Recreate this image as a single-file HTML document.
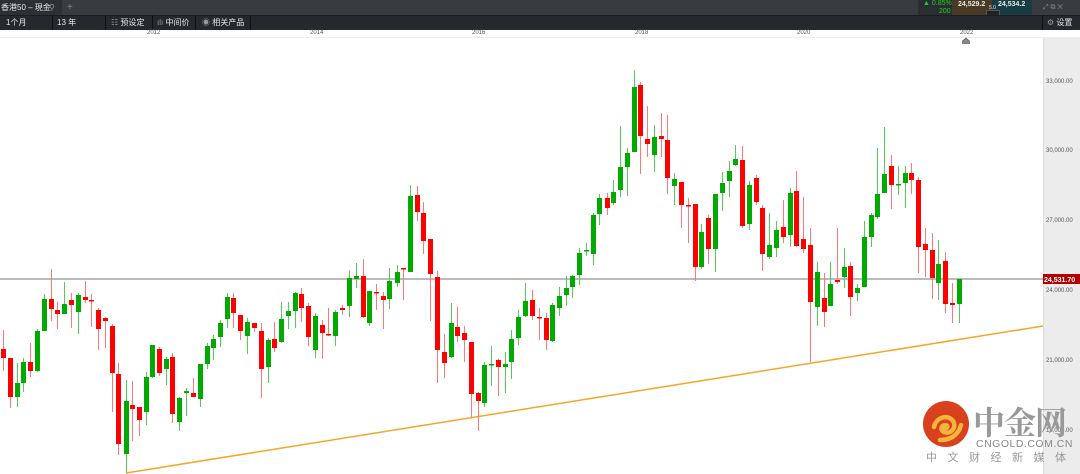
<!DOCTYPE html>
<html><head><meta charset="utf-8"><style>
*{margin:0;padding:0;box-sizing:border-box}
body{width:1080px;height:474px;overflow:hidden;background:#fff;font-family:"Liberation Sans","Noto Sans CJK SC",sans-serif;position:relative}
.r1{position:absolute;left:0;top:0;width:1080px;height:15px;background:#383b40}
.r2{position:absolute;left:0;top:15px;width:1080px;height:15px;background:#25282c;border-top:1px solid #1a1c1f}
.t{position:absolute;font-size:8px;color:#e6e6e6;line-height:15px;white-space:nowrap}
.sep{position:absolute;top:15px;width:1px;height:15px;background:#111}
.ax{position:absolute;font-size:6px;color:#555;}
</style></head><body>
<div class="r1"></div>
<div style="position:absolute;left:0;top:0;width:62px;height:15px;background:#2c2f34"></div>
<div class="t" style="left:1px;top:0">香港50 – 現金</div>
<div class="t" style="left:49px;top:0;color:#999">⚲</div>
<div class="t" style="left:67px;top:0;color:#888;font-size:10px">+</div>
<div style="position:absolute;left:918px;top:0;width:34px;height:15px;background:#2a2d31"></div>
<div class="t" style="left:923px;top:-4px;color:#2c2;font-size:7px">▲ 0.85%</div>
<div class="t" style="left:939px;top:4px;color:#2c2;font-size:7px">200</div>
<div style="position:absolute;left:953px;top:0;width:39px;height:15px;background:#4a3a24"></div>
<div class="t" style="left:958px;top:-3px;font-weight:bold;font-size:7px">24,529.2</div>
<div style="position:absolute;left:992px;top:0;width:40px;height:15px;background:#173c44"></div>
<div class="t" style="left:998px;top:-3px;font-weight:bold;font-size:7px">24,534.2</div>
<div style="position:absolute;left:986px;top:10px;width:14px;height:6px;background:#222;border:1px solid #555"></div>
<div class="t" style="left:989px;top:5px;font-size:5px;line-height:6px">5.0</div>
<div class="t" style="left:1043px;top:0;color:#888;font-size:7px">⤢ ⧉ ✕</div>
<div class="r2"></div>
<div class="t" style="left:6px;top:15px">1个月</div>
<div class="sep" style="left:52px"></div>
<div class="t" style="left:57px;top:15px">13 年</div>
<div class="sep" style="left:105px"></div>
<div class="t" style="left:111px;top:15px"><span style="color:#999">☷</span> 预设定</div>
<div class="sep" style="left:152px"></div>
<div class="t" style="left:157px;top:15px"><span style="color:#999">ılı</span> 中间价</div>
<div class="sep" style="left:195px"></div>
<div class="t" style="left:202px;top:15px"><span style="color:#999">◉</span> 相关产品</div>
<div class="sep" style="left:250px"></div>
<div class="sep" style="left:1042px"></div>
<div class="t" style="left:1047px;top:15px"><span style="color:#999">⚙</span> 设置</div>
<div style="position:absolute;left:0;top:30px;width:1080px;height:8px;background:#fff;border-bottom:1px solid #eee"></div>
<div class="ax" style="left:147px;top:30px">2012</div>
<div class="ax" style="left:310px;top:30px">2014</div>
<div class="ax" style="left:472px;top:30px">2016</div>
<div class="ax" style="left:635px;top:30px">2018</div>
<div class="ax" style="left:797px;top:30px">2020</div>
<div class="ax" style="left:960px;top:30px">2022</div>
<div style="position:absolute;left:1043px;top:38px;width:37px;height:436px;background:#ececec;border-left:1px solid #ddd"></div>
<div class="ax" style="left:1046px;top:79px">33,000.00</div>
<div class="ax" style="left:1046px;top:148px">30,000.00</div>
<div class="ax" style="left:1046px;top:218px">27,000.00</div>
<div class="ax" style="left:1046px;top:288px">24,000.00</div>
<div class="ax" style="left:1046px;top:358px">21,000.00</div>
<div class="ax" style="left:1046px;top:428px">18,000.00</div>
<svg id="c" width="1080" height="474" style="position:absolute;left:0;top:0">
<path d="M962.5 43.5 v-2.5 l3.5-3 l3.5 3 v2.5 z" fill="#888" stroke="#666" stroke-width="0.8"/>
<line x1="0" y1="279" x2="1043" y2="279" stroke="#777" stroke-width="1"/>
<line x1="126" y1="473" x2="1043" y2="326" stroke="#f5a623" stroke-width="1.5"/>
<g id="cg"></g>
<rect x="1043" y="274" width="37" height="10" fill="#b30000"/>
<text x="1044" y="282" font-size="7" fill="#fff" font-weight="bold" font-family="Liberation Sans">24,531.70</text>
</svg>
<svg width="50" height="50" style="position:absolute;left:922px;top:400px" viewBox="0 0 50 50">
<circle cx="24" cy="24" r="23" fill="#d8401e"/>
<path d="M12 27 c2-10 14-13 19-6 c4 6-2 14-9 11 c-4-2-3-7 1-7 c3 0 3 3 1 3 M18 40 c8 0 18-3 21-15" fill="none" stroke="#f3b63a" stroke-width="4.5" stroke-linecap="round"/>
</svg>
<div style="position:absolute;left:973px;top:401px;font-size:32px;font-weight:bold;color:#999;font-family:'Noto Serif CJK SC','Noto Sans CJK SC',serif;line-height:40px;white-space:nowrap;letter-spacing:-1px">中金网</div>
<div style="position:absolute;left:976px;top:438px;font-size:10.5px;color:#888;letter-spacing:0.5px;white-space:nowrap">CNGOLD.COM.CN</div>
<div style="position:absolute;left:926px;top:451px;font-size:11px;color:#999;letter-spacing:10.5px;line-height:14px;white-space:nowrap">中文财经新媒体</div>
<script>
var d=[[3,'r',349,358,330,371],[10,'r',358,397,358,408],[17,'g',383,397,363,407],[23,'g',362,383,358,392],[30,'r',362,371,343,377],[37,'g',331,371,329,372],[44,'g',299,331,294,331],[51,'r',299,309,269,321],[57,'r',310,314,302,329],[64,'g',304,314,282,314],[71,'r',300,305,293,328],[78,'g',295,312,293,334],[85,'r',297,300,281,303],[91,'r',300,301,294,327],[98,'r',310,329,308,350],[105,'r',318,321,317,348],[112,'r',326,373,324,412],[118,'r',374,444,363,455],[126,'g',401,454,380,473],[132,'r',405,409,381,441],[139,'r',407,420,407,436],[146,'g',377,412,372,425],[152,'g',345,377,345,378],[159,'r',349,373,347,376],[166,'g',359,369,357,385],[172,'r',357,414,353,423],[179,'g',398,422,397,431],[186,'g',391,393,388,416],[193,'r',393,397,378,397],[200,'g',364,399,364,407],[207,'g',346,364,343,369],[213,'g',339,348,335,360],[220,'g',323,337,320,347],[227,'g',297,319,293,328],[233,'r',298,313,293,328],[240,'r',315,331,315,340],[247,'g',322,336,318,354],[254,'r',323,328,323,332],[261,'r',331,369,323,398],[268,'g',340,367,338,383],[274,'r',339,348,322,352],[281,'g',319,342,302,343],[288,'g',311,316,302,329],[295,'g',293,311,292,328],[301,'r',294,308,288,322],[308,'r',306,337,303,346],[315,'g',316,350,313,358],[322,'r',325,333,320,359],[328,'r',334,335,308,336],[335,'g',312,336,310,346],[342,'r',308,310,305,315],[349,'g',278,306,270,317],[356,'g',276,279,263,288],[363,'r',276,317,259,318],[369,'g',291,323,291,326],[376,'r',292,293,284,310],[383,'r',296,300,292,329],[389,'g',281,299,268,309],[397,'g',272,283,265,287],[403,'r',268,269,268,300],[410,'g',196,272,185,272],[417,'r',195,212,186,221],[423,'r',213,241,202,254],[430,'r',239,274,239,321],[437,'r',277,350,271,383],[444,'r',352,363,334,378],[451,'g',323,357,303,358],[457,'r',327,336,307,342],[464,'r',333,340,326,362],[471,'r',342,394,342,417],[478,'r',393,401,392,431],[484,'g',365,403,362,407],[491,'g',364,365,346,386],[498,'r',360,367,359,396],[505,'g',364,367,352,393],[511,'g',339,362,330,379],[518,'g',317,338,310,345],[525,'g',301,316,283,317],[532,'r',300,316,290,320],[539,'r',317,318,308,340],[546,'r',318,340,313,350],[552,'g',305,341,303,342],[559,'g',296,308,287,316],[566,'g',288,295,276,306],[572,'g',276,287,275,298],[579,'g',253,275,248,285],[586,'g',250,251,243,256],[593,'g',215,254,213,265],[599,'g',198,214,194,225],[607,'r',198,208,193,215],[613,'g',192,203,180,205],[620,'g',167,190,126,197],[627,'g',153,167,148,196],[634,'g',87,152,70,152],[640,'r',85,136,82,174],[647,'r',139,144,106,157],[654,'g',137,155,125,172],[661,'r',136,139,113,157],[667,'r',140,178,115,194],[674,'g',179,186,173,205],[681,'r',182,205,182,228],[688,'r',205,206,198,243],[695,'r',204,267,204,281],[701,'g',232,267,224,269],[708,'r',218,249,215,264],[715,'g',194,249,194,272],[722,'g',183,193,172,211],[729,'g',171,181,161,197],[735,'g',159,165,145,166],[742,'r',160,226,146,228],[749,'g',185,224,181,230],[756,'r',178,202,175,205],[762,'r',208,254,205,271],[769,'g',245,257,213,259],[776,'g',230,248,221,257],[783,'r',227,237,200,243],[790,'g',193,235,188,247],[796,'r',191,246,171,247],[803,'r',239,249,197,253],[810,'r',245,302,228,362],[817,'g',272,307,262,326],[824,'r',298,312,273,327],[830,'g',284,306,262,306],[837,'r',280,282,228,284],[844,'g',267,277,248,288],[850,'r',266,297,262,316],[857,'g',288,293,284,301],[864,'g',237,287,221,287],[871,'g',215,237,213,247],[877,'g',194,217,148,219],[884,'g',174,193,127,193],[891,'r',166,185,155,209],[898,'g',184,185,166,195],[905,'g',173,183,166,208],[911,'r',173,180,163,194],[918,'r',180,247,177,273],[925,'r',244,250,228,277],[932,'r',250,278,233,299],[938,'g',264,283,240,300],[945,'r',261,304,252,313],[952,'r',303,305,283,323],[959,'g',279,304,279,323]];
var s='';d.forEach(function(c){var col=c[1]=='r'?'#f00':'#0a0',wc=c[1]=='r'?'#f77':'#5c5';
s+='<line x1="'+(c[0]+.5)+'" y1="'+c[4]+'" x2="'+(c[0]+.5)+'" y2="'+c[5]+'" stroke="'+wc+'" stroke-width="1"/>';
s+='<rect x="'+(c[0]-2)+'" y="'+c[2]+'" width="5" height="'+Math.max(1.5,c[3]-c[2])+'" fill="'+col+'"/>';});
document.getElementById('cg').innerHTML=s;
</script>
</body></html>
